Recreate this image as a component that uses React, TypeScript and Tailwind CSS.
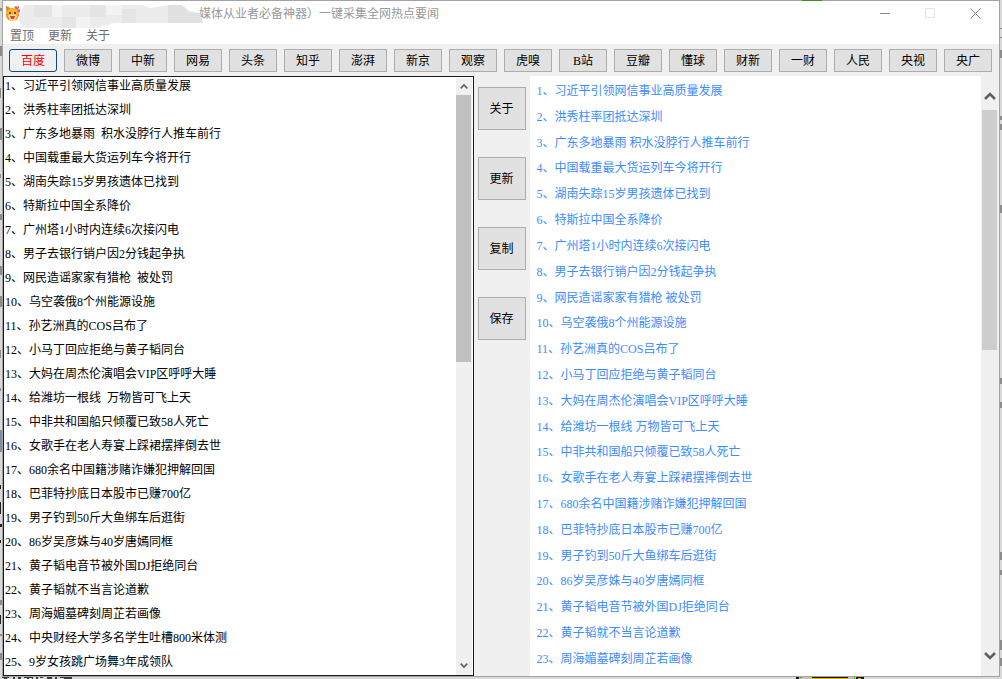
import React, { useState } from "react";

const sites = [
  "百度", "微博", "中新", "网易", "头条", "知乎", "澎湃", "新京", "观察",
  "虎嗅", "B站", "豆瓣", "懂球", "财新", "一财", "人民", "央视", "央广",
];

const menus = ["置顶", "更新", "关于"];
const actions = ["关于", "更新", "复制", "保存"];

const news = [
  "习近平引领网信事业高质量发展",
  "洪秀柱率团抵达深圳",
  "广东多地暴雨  积水没脖行人推车前行",
  "中国载重最大货运列车今将开行",
  "湖南失踪15岁男孩遗体已找到",
  "特斯拉中国全系降价",
  "广州塔1小时内连续6次接闪电",
  "男子去银行销户因2分钱起争执",
  "网民造谣家家有猎枪  被处罚",
  "乌空袭俄8个州能源设施",
  "孙艺洲真的COS吕布了",
  "小马丁回应拒绝与黄子韬同台",
  "大妈在周杰伦演唱会VIP区呼呼大睡",
  "给潍坊一根线  万物皆可飞上天",
  "中非共和国船只倾覆已致58人死亡",
  "女歌手在老人寿宴上踩裙摆摔倒去世",
  "680余名中国籍涉赌诈嫌犯押解回国",
  "巴菲特抄底日本股市已赚700亿",
  "男子钓到50斤大鱼绑车后逛街",
  "86岁吴彦姝与40岁唐嫣同框",
  "黄子韬电音节被外国DJ拒绝同台",
  "黄子韬就不当言论道歉",
  "周海媚墓碑刻周芷若画像",
  "中央财经大学多名学生吐槽800米体测",
  "9岁女孩跳广场舞3年成领队",
];

const lines = news.map((title, idx) => `${idx + 1}、${title}`);

const CatIcon = () => (
  <svg width="16" height="17" viewBox="0 0 16 17" className="shrink-0">
    <path d="M0 1l4 2h4l3-1 2 7c0 5-3 7-6 7s-7-1-7-7z" fill="#f2b632" />
    <path d="M0 1l4 2-3 3zM0 11l3 1v3zM12 10l-2 3v2z" fill="#e2792b" />
    <path d="M2 11c2-2 8-2 9 0-1 4-3 5-4 5s-4-1-5-5z" fill="#f6d98c" />
    <path d="M3 7h2v2H3zM8 7h2v2H8z" fill="#7a4a1c" />
    <path d="M4 11h5l-1 3H5z" fill="#d8403a" />
    <path d="M8 2l2-1 1 1 2-1v2l-2 2zM11 5l3-1v3l-2 1z" fill="#ee5c74" />
    <path d="M0 9h2v2H0zM11 9h2v2h-2z" fill="#ee8b6a" />
  </svg>
);

// mosaic strip that hides the product name
const Mosaic = () => (
  <svg width="188" height="27" viewBox="0 0 188 27" className="absolute -left-1 -top-1">
    <path d="M6 4h118l8 3 20-3c10-1 16 1 19 6 8 0 13 3 14 12H96l-20 6H12C2 28-1 18 2 12z" fill="#ececec" />
    <path d="M16 4h18v12H16zM44 16h14v11H44zM72 4h16v12H72zM104 8h14v14h-14z" fill="#e5e5e5" />
    <path d="M34 4h10v12H34zM58 16h14v11H58zM88 4h16v10H88z" fill="#f3f3f3" />
    <path d="M150 4h14l8 9v9h-22zM170 12h12l3 10h-15z" fill="#e1e1e1" />
  </svg>
);

type ArrowProps = { size: number; down?: boolean; width: number };

const Arrow = ({ size, down, width }: ArrowProps) => (
  <svg width={size} height={size} viewBox="0 0 12 12" fill="none" stroke="#606060" strokeWidth={width}>
    <path d={down ? "M1 4l5 5 5-5" : "M1 8l5-5 5 5"} />
  </svg>
);

const TitleBar = () => (
  <div className="flex h-6 items-center bg-white pl-[3px] pr-[17px] text-[12px] text-[#999999]">
    <CatIcon />
    <div className="relative flex h-4 w-[177px] shrink-0 items-center justify-end">
      <Mosaic />
    </div>
    <h1 className="flex-1 whitespace-nowrap leading-4">媒体从业者必备神器）一键采集全网热点要闻</h1>
    <div className="flex items-center gap-[34px]">
      <button aria-label="最小化">
        <svg width="11" height="11" viewBox="0 0 11 11" stroke="#8a8a8a">
          <path d="M0 5.5h10" />
        </svg>
      </button>
      <button aria-label="最大化">
        <svg width="11" height="11" viewBox="0 0 11 11" fill="none" stroke="#e4e4e4">
          <path d="M.5 .5h9v9h-9z" />
        </svg>
      </button>
      <button aria-label="关闭">
        <svg width="11" height="11" viewBox="0 0 11 11" stroke="#8a8a8a">
          <path d="M.5 .5l10 10M10.5 .5l-10 10" />
        </svg>
      </button>
    </div>
  </div>
);

// bits of the desktop that show around the window
const Desktop = () => (
  <>
    <svg width="2" height="679" viewBox="0 0 2 679" className="absolute left-0 top-0">
      <path
        d="M0 8h2v3H0zM0 46h2v10H0zM0 88h1v10H0zM0 128h2v12H0zM0 174h1v4H0zM0 214h2v6H0zM0 266h2v9H0zM0 296h2v11H0zM0 350h1v8H0zM0 388h1v3H0zM0 600h2v5H0zM0 634h2v2H0zM0 653h2v7H0z"
        fill="#8c8c8c"
      />
      <path d="M0 430h2v22H0z" fill="#7f8fa3" />
      <path d="M0 485h1v4H0zM0 502h1v12H0zM0 524h2v3H0zM0 540h1v3H0zM0 615h1v9H0z" fill="#222" />
    </svg>
    <svg width="2" height="679" viewBox="1 0 2 679" className="absolute right-0 top-0">
      <path
        d="M1 28h2v1H1zM1 37h2v1H1zM1 50h2v8H1zM1 116h2v4H1zM1 124h2v6H1zM1 205h2v8H1zM1 378h2v6H1zM1 402h2v6H1zM1 552h2v8H1zM1 570h2v5H1zM1 640h2v10H1zM1 658h2v8H1z"
        fill="#8c8c8c"
      />
    </svg>
    <svg width="74" height="2" viewBox="0 0 74 2" className="absolute bottom-0 left-0">
      <path d="M2 0h7v1H2zM4 1h3v2H4zM13 0h2v3h-2zM18 0h3v2h-3zM24 0h9v1h-9zM27 1h2v2h-2zM32 1h1v2h-1zM36 0h2v3h-2zM40 0h3v1h-3zM47 0h5v2h-5zM55 0h2v3h-2zM60 0h5v1h-5zM64 0h8v2h-8z" fill="#3c3c3c" />
    </svg>
    <svg width="70" height="2" viewBox="0 0 70 2" className="absolute bottom-0 right-[136px]">
      <path d="M2 0h66v2H2z" fill="#c9c4a8" />
      <path d="M0 0h3v2H0zM16 0h36v1H16zM60 0h8v2h-8z" fill="#141414" />
      <path d="M16 1h36v1H16zM62 1h3v1h-3z" fill="#dcb800" />
      <path d="M4 0h2v1H4zM58 0h1v2h-1z" fill="#35c22a" />
    </svg>
    <span className="absolute right-[180px] top-0 h-px w-5 bg-[#3f8a2c]" />
  </>
);

const App = () => {
  const [activeSite, setActiveSite] = useState("百度");

  return (
    <div className="relative flex min-h-screen flex-col bg-[#d9d9d9] pb-0.5 pl-0.5 pr-0.5 font-['Liberation_Serif','Noto_Sans_CJK_SC',serif]">
      <div className="flex flex-1 flex-col border border-[#a3a3a3] bg-[#f0f0f0]">
        <header className="bg-white pr-px font-['Noto_Sans_CJK_SC',sans-serif]">
          <TitleBar />
          <nav className="flex h-[19px] items-center gap-3.5 pl-[7px] text-[12px] leading-4 text-[#6e6e6e]">
            {menus.map((menu) => (
              <button key={menu}>{menu}</button>
            ))}
          </nav>
        </header>

        <div className="flex justify-between gap-[7px] pb-1 pl-1.5 pr-[7px] pt-[5px]">
          {sites.map((site) => (
            <button
              key={site}
              onClick={() => setActiveSite(site)}
              className={
                site === activeSite
                  ? "h-[23px] flex-1 whitespace-nowrap rounded-[3px] border border-[#14487a] bg-[#f0f0f0] text-[12px] leading-4 text-[#ff0000]"
                  : "h-[23px] flex-1 whitespace-nowrap border border-[#adadad] bg-[#e1e1e1] text-[12px] leading-4 text-black"
              }
            >
              {site}
            </button>
          ))}
        </div>

        <main className="flex flex-1 pr-px">
          <section className="flex min-w-0 flex-1 border border-[#1a1a1a] bg-white">
            <div className="min-w-0 flex-1 overflow-hidden">
              <textarea
                aria-label="热点列表"
                readOnly
                rows={25}
                value={lines.join("\n")}
                className="-mb-2 -mt-[3px] block w-full resize-none overflow-hidden whitespace-pre bg-transparent pl-px text-[12px] leading-6 text-black outline-none"
              />
            </div>
            <div className="mr-px mt-px flex w-4 flex-col items-center bg-[#f0f0f0]">
              <div className="flex h-[17px] items-center">
                <Arrow size={8} width={2.4} />
              </div>
              <div className="h-[267px] w-[15px] self-start bg-[#c0c0c0]" />
              <div className="mt-auto flex h-5 items-center">
                <Arrow size={8} width={2.4} down />
              </div>
            </div>
          </section>

          <div className="flex w-14 shrink-0 flex-col items-center gap-[27px] pt-[11px]">
            {actions.map((action) => (
              <button
                key={action}
                className="h-[43px] w-12 border border-[#adadad] bg-[#e1e1e1] text-[12px] leading-4 text-black"
              >
                {action}
              </button>
            ))}
          </div>

          <section className="flex min-w-0 flex-1 bg-white">
            <ol className="flex min-w-0 flex-1 flex-col justify-between pb-2 pl-[7px] pt-1.5">
              {lines.slice(0, 23).map((line) => (
                <li key={line} className="text-[12px] leading-[18px]">
                  <a href="#" className="text-[#3b8cff]">{line}</a>
                </li>
              ))}
            </ol>
            <div className="flex w-[17px] flex-col items-center bg-[#f0f0f0]">
              <div className="flex h-[34px] items-center pt-2">
                <Arrow size={12} width={2.6} />
              </div>
              <div className="h-60 w-[15px] bg-[#cdcdcd]" />
              <div className="mt-auto flex h-[34px] items-center pb-2">
                <Arrow size={12} width={2.6} down />
              </div>
            </div>
          </section>
        </main>
      </div>
      <Desktop />
    </div>
  );
};

export default App;
